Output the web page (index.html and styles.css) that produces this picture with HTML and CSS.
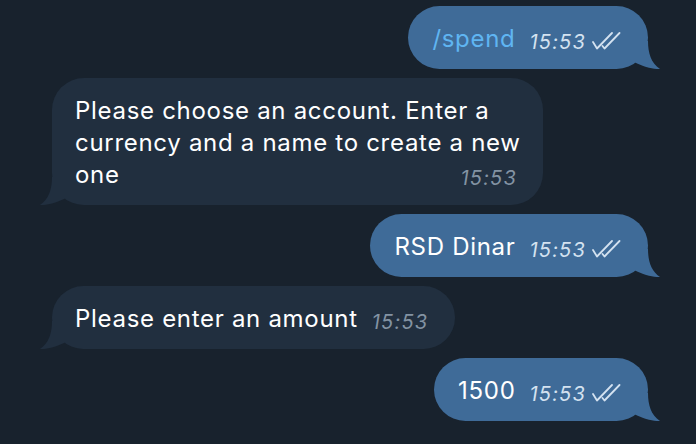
FILE: index.html
```html
<!DOCTYPE html>
<html lang="en">
<head>
    <meta charset="UTF-8">
    <meta name="viewport" content="width=device-width, initial-scale=1.0">
    <title>Chat</title>
    <link rel="stylesheet" href="styles.css">
</head>
<body>
    <div class="chat">
        <div class="bubble out">
            <span class="command">/spend</span>
            <span class="meta">15:53<svg class="checks" viewBox="0 0 29 18"><path d="M1 10 L5 16.5 L20 1 M10.5 14 L12.5 16.5 L27.5 1"/></svg></span>
            <svg class="tail" viewBox="0 0 30 28"><path d="M4 0 L18 0 C18 12 21 22 30 28 C24 28.5 14 26 4 21 Z"/></svg>
        </div>

        <div class="bubble in wide">
            <span class="meta">15:53</span>
            <p class="body-text">Please choose an account. Enter a currency and a name to create a new one</p>
            <svg class="tail" viewBox="0 0 30 28"><path d="M4 0 L18 0 C18 12 21 22 30 28 C24 28.5 14 26 4 21 Z"/></svg>
        </div>

        <div class="bubble out">
            RSD Dinar
            <span class="meta">15:53<svg class="checks" viewBox="0 0 29 18"><path d="M1 10 L5 16.5 L20 1 M10.5 14 L12.5 16.5 L27.5 1"/></svg></span>
            <svg class="tail" viewBox="0 0 30 28"><path d="M4 0 L18 0 C18 12 21 22 30 28 C24 28.5 14 26 4 21 Z"/></svg>
        </div>

        <div class="bubble in">
            Please enter an amount
            <span class="meta">15:53</span>
            <svg class="tail" viewBox="0 0 30 28"><path d="M4 0 L18 0 C18 12 21 22 30 28 C24 28.5 14 26 4 21 Z"/></svg>
        </div>

        <div class="bubble out">
            1500
            <span class="meta">15:53<svg class="checks" viewBox="0 0 29 18"><path d="M1 10 L5 16.5 L20 1 M10.5 14 L12.5 16.5 L27.5 1"/></svg></span>
            <svg class="tail" viewBox="0 0 30 28"><path d="M4 0 L18 0 C18 12 21 22 30 28 C24 28.5 14 26 4 21 Z"/></svg>
        </div>
    </div>
</body>
</html>
```

FILE: styles.css
```css
:root {
    --bg: #18222d;
    --bubble-out: #3f6b98;
    --bubble-in: #212f3f;
    --text: #ffffff;
    --link: #5fb5f2;
    --time-out: #d4e2f0;
    --time-in: #8393a3;
}

* {
    margin: 0;
    padding: 0;
    box-sizing: border-box;
}

body {
    background: var(--bg);
    font-family: Inter, "Noto Sans", sans-serif;
    color: var(--text);
    height: 100vh;
    overflow: hidden;
}

.chat {
    display: flex;
    flex-direction: column;
    gap: 9px;
    padding: 6px 48px 0 52px;
}

.bubble {
    position: relative;
    font-size: 24px;
    letter-spacing: 0.7px;
    line-height: 32px;
    padding: 16.5px 27px 14.5px 23px;
    border-radius: 32px;
    max-width: 491px;
}

/* multi-line message: time sits at the end of the last line */
.bubble.wide {
    display: flex;
    flex-direction: column-reverse;
    padding-right: 22px;
}

.bubble.wide .meta {
    float: none;
    align-self: flex-end;
    margin-top: -26px;
    margin-right: 4px;
}

.bubble.out {
    align-self: flex-end;
    background: var(--bubble-out);
    padding-left: 24px;
}

.bubble.in {
    align-self: flex-start;
    background: var(--bubble-in);
}

.command {
    color: var(--link);
}

.meta {
    float: right;
    margin-left: 14px;
    margin-top: 6px;
    line-height: 26px;
    font-size: 20px;
    letter-spacing: 1.2px;
    font-style: italic;
}

.out .meta {
    color: var(--time-out);
}

.in .meta {
    color: var(--time-in);
}

.checks {
    width: 29px;
    height: 18px;
    margin-left: 6px;
    vertical-align: -1px;
    fill: none;
    stroke: var(--time-out);
    stroke-width: 1.8;
    stroke-linecap: round;
    stroke-linejoin: round;
}

.tail {
    position: absolute;
    bottom: 0;
    width: 30px;
    height: 28px;
}

.out .tail {
    right: -12px;
    fill: var(--bubble-out);
}

.in .tail {
    left: -12px;
    fill: var(--bubble-in);
    transform: scaleX(-1);
}
```
